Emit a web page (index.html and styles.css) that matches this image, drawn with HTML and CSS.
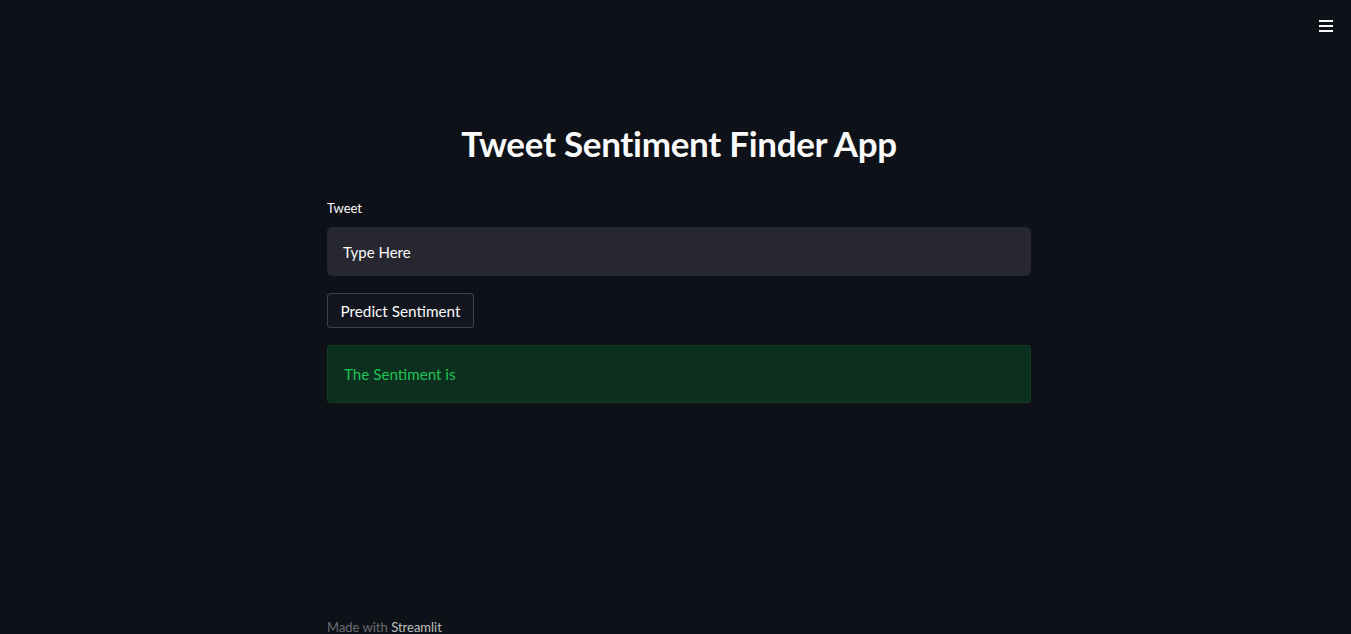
FILE: index.html
```html
<!DOCTYPE html>
<html>
<head>
<meta charset="utf-8">
<link rel="stylesheet" href="styles.css">
</head>
<body>
<header class="topbar">
  <button class="menu" aria-label="menu">
    <svg width="16" height="14" viewBox="0 0 16 14"><rect x="1" y="1" width="14" height="2" fill="#fafafa"/><rect x="1" y="6" width="14" height="2" fill="#fafafa"/><rect x="1" y="11" width="14" height="2" fill="#fafafa"/></svg>
  </button>
</header>
<main class="main">
  <div class="block">
    <h1 class="title">Tweet Sentiment Finder App</h1>
    <div class="field">
      <label class="label">Tweet</label>
      <div class="input">Type Here</div>
    </div>
    <button class="btn">Predict Sentiment</button>
    <div class="alert">The Sentiment is</div>
  </div>
</main>
<footer class="footer">Made with <span class="brand">Streamlit</span></footer>
</body>
</html>
```

FILE: styles.css
```css
html, body {
  margin: 0;
  padding: 0;
  background: #0e1117;
  color: #fafafa;
  font-family: "Lato", "Noto Sans", sans-serif;
  height: 634px;
  overflow: hidden;
}
.topbar {
  display: flex;
  justify-content: flex-end;
  padding: 17px 15px 0 0;
  height: 30px;
}
.menu {
  background: none;
  border: none;
  padding: 0;
  width: 20px;
  height: 18px;
  display: flex;
  align-items: center;
  justify-content: center;
}
.main {
  display: flex;
  justify-content: center;
  padding-left: 7px;
}
.block {
  width: 704px;
  display: flex;
  flex-direction: column;
}
.title {
  margin: 70px 0 0 0;
  text-align: center;
  font-size: 35px;
  font-weight: 700;
  line-height: 52px;
  letter-spacing: -0.3px;
}
.field {
  margin-top: 31px;
  display: flex;
  flex-direction: column;
}
.label {
  font-size: 13px;
  line-height: 16px;
  margin-bottom: 11px;
}
.input {
  height: 49px;
  background: #262730;
  border-radius: 5px;
  box-sizing: border-box;
  padding: 0 16px;
  display: flex;
  align-items: center;
  font-size: 15px;
}
.btn {
  align-self: flex-start;
  margin-top: 17px;
  height: 35px;
  width: 147px;
  background: #13161e;
  border: 1px solid rgba(250,250,250,0.2);
  border-radius: 4px;
  color: #fafafa;
  font-family: inherit;
  font-size: 15.3px;
  padding: 0;
}
.alert {
  margin-top: 17px;
  height: 58px;
  box-sizing: border-box;
  background: #0c2f1f;
  border: 1px solid #123d22;
  border-radius: 3px;
  padding: 0 16px;
  display: flex;
  align-items: center;
  color: #21c354;
  font-size: 15.2px;
}
.footer {
  position: absolute;
  left: 327px;
  top: 619px;
  font-size: 13px;
  color: rgba(250,250,250,0.4);
}
.brand {
  color: rgba(250,250,250,0.75);
}
```
